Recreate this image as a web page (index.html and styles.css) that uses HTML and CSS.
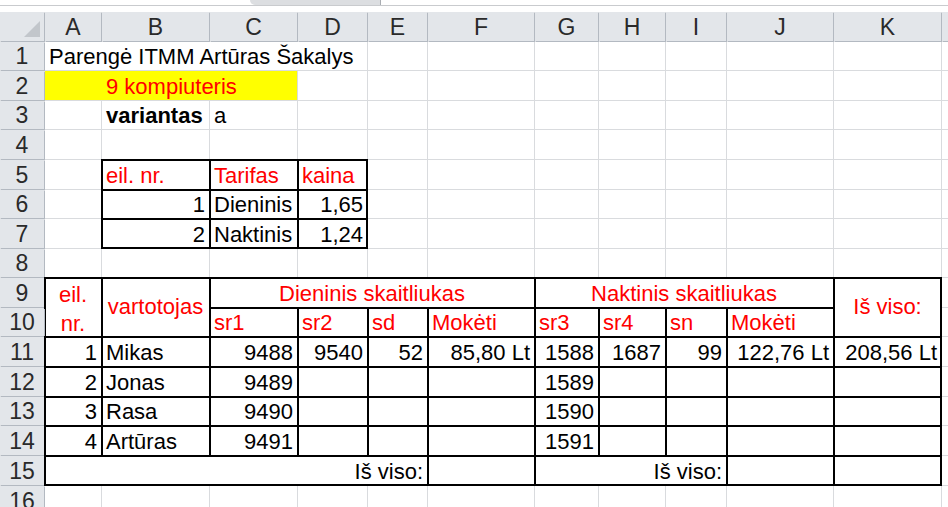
FILE: index.html
```html
<!DOCTYPE html>
<html lang="lt">
<head>
<meta charset="utf-8">
<title>Sheet</title>
<link rel="stylesheet" href="styles.css">
</head>
<body>
<div class="top"><div class="tab"></div></div>
<div class="sheet">
  <!-- column headers -->
  <div class="h corner"><svg width="16" height="16" viewBox="0 0 16 16"><polygon points="16,0 16,16 0,16" fill="#c2c6cb"/></svg></div>
  <div class="h">A</div><div class="h">B</div><div class="h">C</div><div class="h">D</div><div class="h">E</div><div class="h">F</div><div class="h">G</div><div class="h">H</div><div class="h">I</div><div class="h">J</div><div class="h">K</div><div class="h"></div>

  <!-- row 1 -->
  <div class="h">1</div>
  <div class="c s4">Parengė ITMM Artūras Šakalys</div>
  <div class="c"></div><div class="c"></div><div class="c"></div><div class="c"></div><div class="c"></div><div class="c"></div><div class="c"></div><div class="c"></div>

  <!-- row 2 -->
  <div class="h">2</div>
  <div class="c s3 y red">9 kompiuteris</div>
  <div class="c"></div><div class="c"></div><div class="c"></div><div class="c"></div><div class="c"></div><div class="c"></div><div class="c"></div><div class="c"></div><div class="c"></div>

  <!-- row 3 -->
  <div class="h">3</div>
  <div class="c"></div>
  <div class="c b">variantas</div>
  <div class="c">a</div>
  <div class="c"></div><div class="c"></div><div class="c"></div><div class="c"></div><div class="c"></div><div class="c"></div><div class="c"></div><div class="c"></div><div class="c"></div>

  <!-- row 4 -->
  <div class="h">4</div>
  <div class="c"></div><div class="c"></div><div class="c"></div><div class="c"></div><div class="c"></div><div class="c"></div><div class="c"></div><div class="c"></div><div class="c"></div><div class="c"></div><div class="c"></div><div class="c"></div>

  <!-- row 5 -->
  <div class="h">5</div>
  <div class="c"></div>
  <div class="c t red">eil. nr.</div>
  <div class="c t red">Tarifas</div>
  <div class="c t R red">kaina</div>
  <div class="c"></div><div class="c"></div><div class="c"></div><div class="c"></div><div class="c"></div><div class="c"></div><div class="c"></div><div class="c"></div>

  <!-- row 6 -->
  <div class="h">6</div>
  <div class="c"></div>
  <div class="c t n">1</div>
  <div class="c t">Dieninis</div>
  <div class="c t R n">1,65</div>
  <div class="c"></div><div class="c"></div><div class="c"></div><div class="c"></div><div class="c"></div><div class="c"></div><div class="c"></div><div class="c"></div>

  <!-- row 7 -->
  <div class="h">7</div>
  <div class="c"></div>
  <div class="c t B n">2</div>
  <div class="c t B">Naktinis</div>
  <div class="c t R B n">1,24</div>
  <div class="c"></div><div class="c"></div><div class="c"></div><div class="c"></div><div class="c"></div><div class="c"></div><div class="c"></div><div class="c"></div>

  <!-- row 8 -->
  <div class="h">8</div>
  <div class="c"></div><div class="c"></div><div class="c"></div><div class="c"></div><div class="c"></div><div class="c"></div><div class="c"></div><div class="c"></div><div class="c"></div><div class="c"></div><div class="c"></div><div class="c"></div>

  <!-- row 9 -->
  <div class="h">9</div>
  <div class="c t r2 wrap red">eil. nr.</div>
  <div class="c t r2 m mid red">vartotojas</div>
  <div class="c t s4 m red">Dieninis skaitliukas</div>
  <div class="c t s4 m red">Naktinis skaitliukas</div>
  <div class="c t R r2 m mid red">Iš viso:</div>
  <div class="c"></div>

  <!-- row 10 -->
  <div class="h">10</div>
  <div class="c t red">sr1</div>
  <div class="c t red">sr2</div>
  <div class="c t red">sd</div>
  <div class="c t red">Mokėti</div>
  <div class="c t red">sr3</div>
  <div class="c t red">sr4</div>
  <div class="c t red">sn</div>
  <div class="c t red">Mokėti</div>
  <div class="c"></div>

  <!-- row 11 -->
  <div class="h">11</div>
  <div class="c t n">1</div>
  <div class="c t">Mikas</div>
  <div class="c t n">9488</div>
  <div class="c t n">9540</div>
  <div class="c t n">52</div>
  <div class="c t n">85,80 Lt</div>
  <div class="c t n">1588</div>
  <div class="c t n">1687</div>
  <div class="c t n">99</div>
  <div class="c t n">122,76 Lt</div>
  <div class="c t R n">208,56 Lt</div>
  <div class="c"></div>

  <!-- row 12 -->
  <div class="h">12</div>
  <div class="c t n">2</div>
  <div class="c t">Jonas</div>
  <div class="c t n">9489</div>
  <div class="c t"></div><div class="c t"></div><div class="c t"></div>
  <div class="c t n">1589</div>
  <div class="c t"></div><div class="c t"></div><div class="c t"></div>
  <div class="c t R"></div>
  <div class="c"></div>

  <!-- row 13 -->
  <div class="h">13</div>
  <div class="c t n">3</div>
  <div class="c t">Rasa</div>
  <div class="c t n">9490</div>
  <div class="c t"></div><div class="c t"></div><div class="c t"></div>
  <div class="c t n">1590</div>
  <div class="c t"></div><div class="c t"></div><div class="c t"></div>
  <div class="c t R"></div>
  <div class="c"></div>

  <!-- row 14 -->
  <div class="h">14</div>
  <div class="c t n">4</div>
  <div class="c t">Artūras</div>
  <div class="c t n">9491</div>
  <div class="c t"></div><div class="c t"></div><div class="c t"></div>
  <div class="c t n">1591</div>
  <div class="c t"></div><div class="c t"></div><div class="c t"></div>
  <div class="c t R"></div>
  <div class="c"></div>

  <!-- row 15 -->
  <div class="h">15</div>
  <div class="c t B s5 n">Iš viso:</div>
  <div class="c t B"></div>
  <div class="c t B s3 n">Iš viso:</div>
  <div class="c t B"></div>
  <div class="c t R B"></div>
  <div class="c"></div>

  <!-- row 16 -->
  <div class="h">16</div>
  <div class="c"></div><div class="c"></div><div class="c"></div><div class="c"></div><div class="c"></div><div class="c"></div><div class="c"></div><div class="c"></div><div class="c"></div><div class="c"></div><div class="c"></div><div class="c"></div>
</div>
</body>
</html>
```
FILE: styles.css
```css
html, body {
  margin: 0;
  padding: 0;
  background: #ffffff;
  overflow: hidden;
}

body {
  font-family: "Liberation Sans", Arial, sans-serif;
  font-size: 22px;
  color: #000;
}

.top {
  height: 5px;
  border-bottom: 1px solid #c9cbce;
  margin-bottom: 6px;
  display: flex;
}

.tab {
  margin-left: 250px;
  width: 130px;
  background: #dcdee1;
  border-right: 1px solid #a9adb2;
  border-radius: 0 0 0 8px;
}

.sheet {
  display: grid;
  grid-template-columns: 44px 56px 107px 87px 69px 59px 106px 63px 66px 60px 106px 107px 20px;
  grid-template-rows: 29px 28px 29px 28px 29px 29px 28px 29px 28px 29px 28px 29px 29px 28px 29px 29px 30px;
  gap: 1px;
  background: #d9dbde;
  width: max-content;
}

.h {
  background: #e3e6ea;
  color: #2a2a2a;
  font-size: 23px;
  display: flex;
  align-items: center;
  justify-content: center;
  line-height: 24px;
  box-shadow: 1px 1px 0 #b3b9c1;
}

.corner {
  align-items: flex-end;
  justify-content: flex-end;
  padding: 0 4px 4px 0;
}

.corner svg {
  display: block;
}

.c {
  background: #ffffff;
  display: flex;
  align-items: flex-end;
  padding: 0 4px 1px;
  line-height: 24px;
  white-space: nowrap;
  overflow: hidden;
  min-width: 0;
}

.n { justify-content: flex-end; }
.m { justify-content: center; }
.red { color: #ff0000; }
.b { font-weight: bold; }

.y {
  background: #ffff00;
  padding-left: 61px;
}

.s3 { grid-column: span 3; }
.s4 { grid-column: span 4; }
.s5 { grid-column: span 5; }
.r2 { grid-row: span 2; }

.mid {
  align-items: center;
  padding-bottom: 0;
}

.wrap {
  white-space: normal;
  text-align: center;
  justify-content: center;
  align-items: center;
  line-height: 29px;
  padding-top: 3px;
  padding-bottom: 0;
}

.t {
  outline: 1px solid #000;
  box-shadow: inset 1px 1px 0 #000;
}

.t.R {
  box-shadow: inset 1px 1px 0 #000, inset -1px 0 0 #000;
}

.t.B {
  box-shadow: inset 1px 1px 0 #000, inset 0 -1px 0 #000;
}

.t.R.B {
  box-shadow: inset 1px 1px 0 #000, inset -1px -1px 0 #000;
}
```
